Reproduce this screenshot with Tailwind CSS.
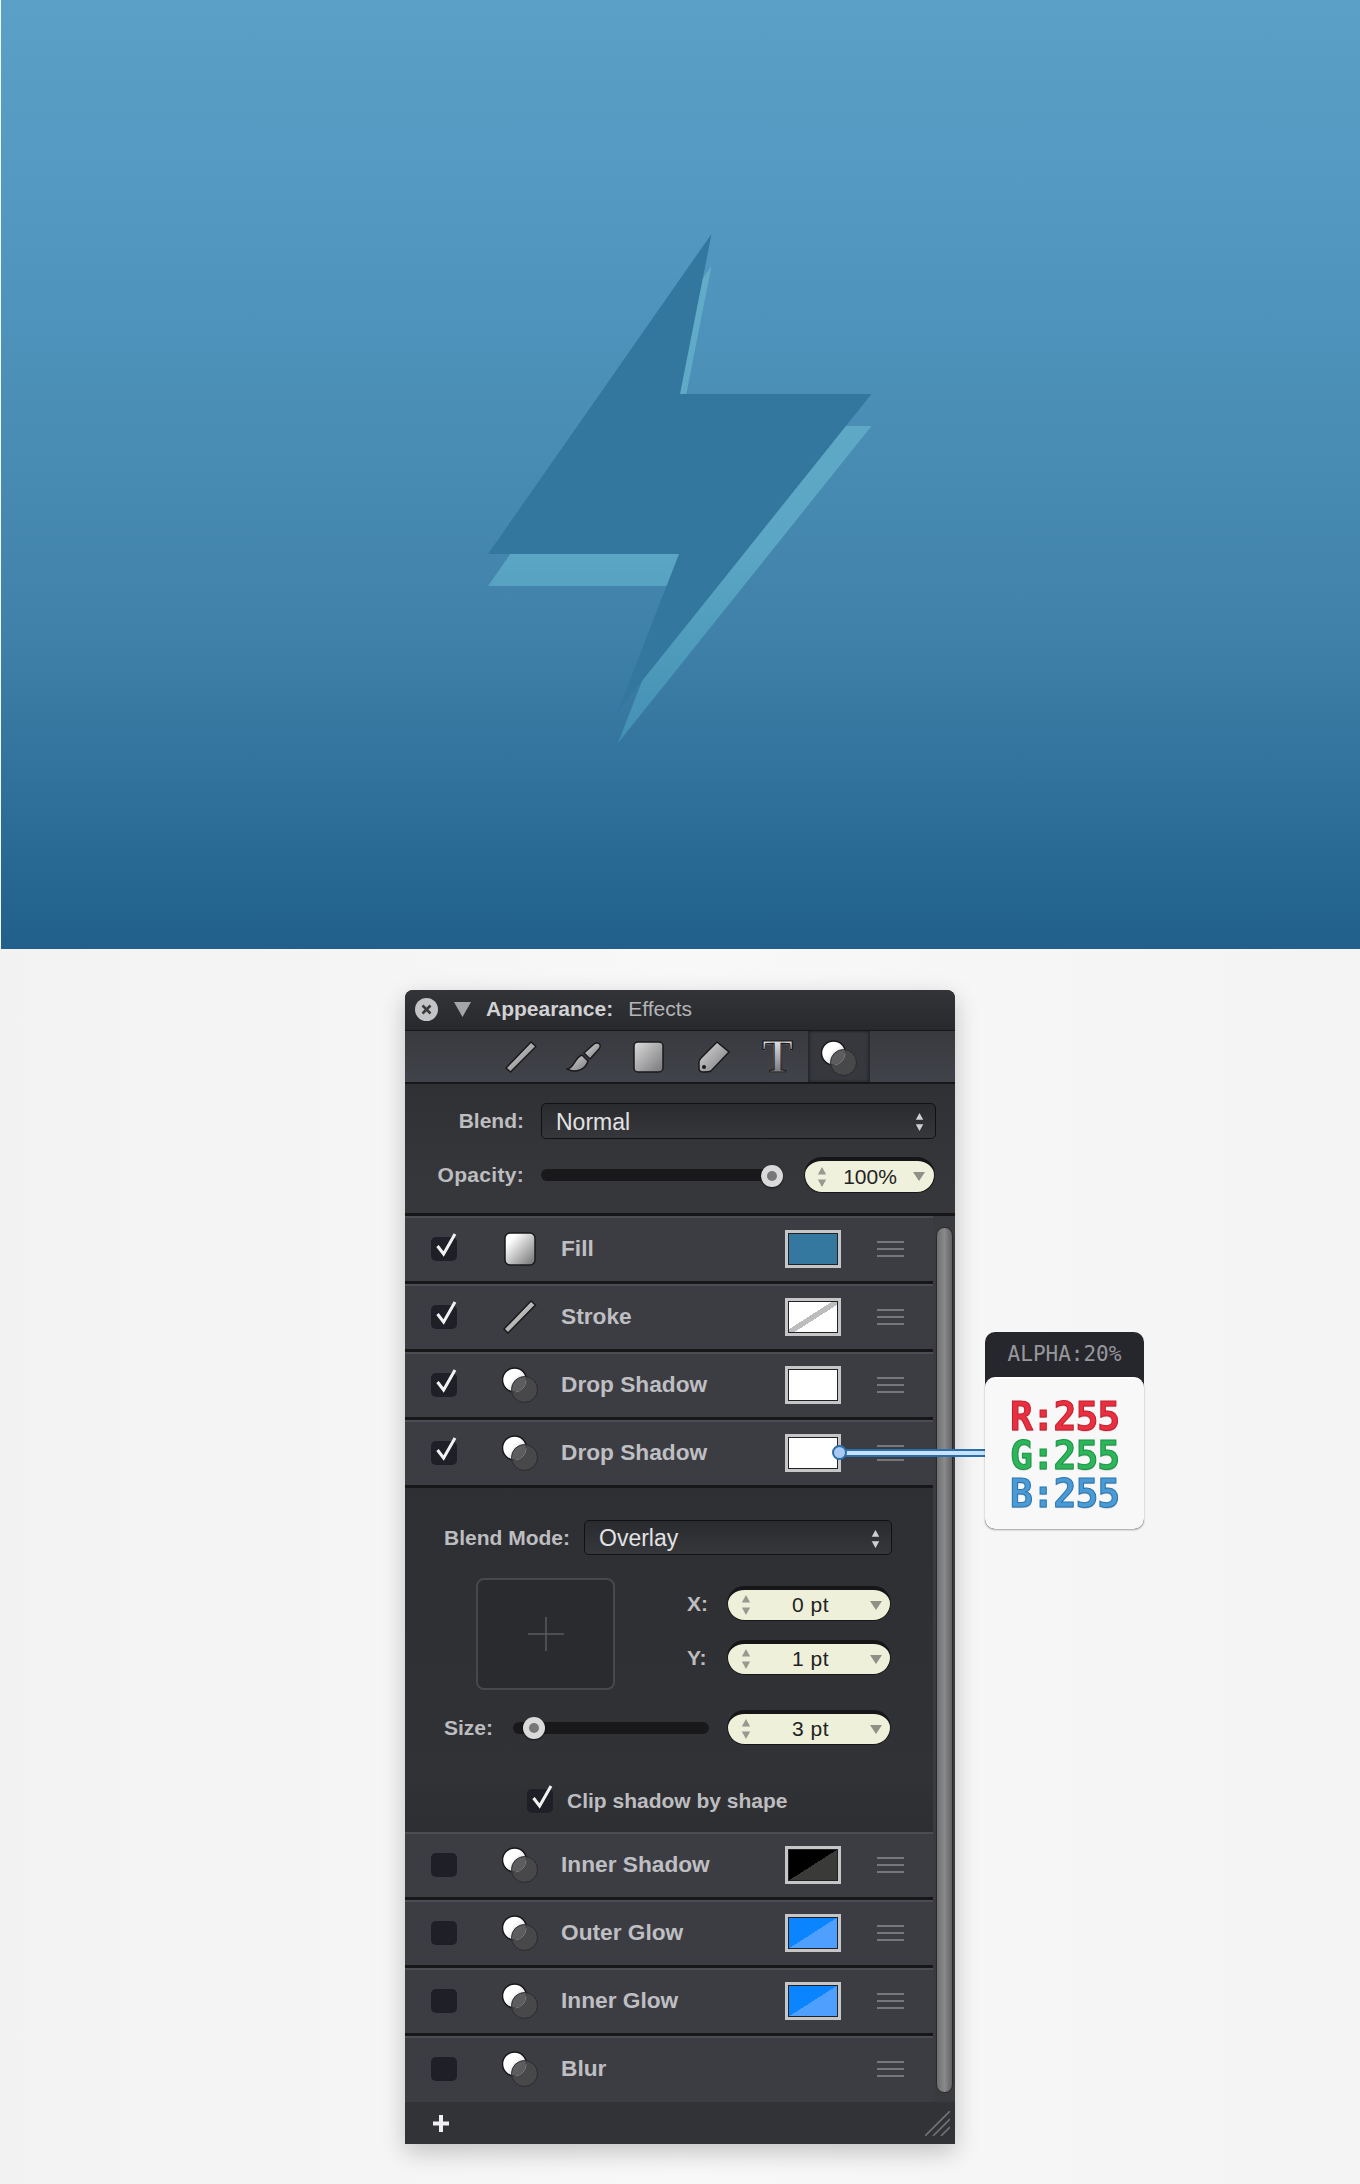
<!DOCTYPE html>
<html lang="en">
<head>
    <meta charset="UTF-8">
    <title>Appearance panel</title>
    <script src="https://cdn.jsdelivr.net/npm/@tailwindcss/browser@4"></script>
</head>
<body class="bg-[#f7f7f7] [font-family:'Liberation_Sans',sans-serif]">

<!-- shared gradients and icons -->
<svg class="absolute w-0 h-0">
    <defs>
        <linearGradient id="metal" x1="0" y1="0" x2="1" y2="1">
            <stop offset="0" stop-color="#f2f2f2"/><stop offset="1" stop-color="#7c7c7e"/>
        </linearGradient>
        <linearGradient id="tool" x1="0" y1="0" x2="1" y2="1">
            <stop offset="0" stop-color="#dcdcdc"/><stop offset="1" stop-color="#77777a"/>
        </linearGradient>
        <linearGradient id="fillBox" x1="0" y1="0" x2="1" y2="1">
            <stop offset="0.2" stop-color="#ffffff"/><stop offset="1" stop-color="#6e6e70"/>
        </linearGradient>
        <linearGradient id="ball" x1="0" y1="0" x2="1" y2="1">
            <stop offset="0.4" stop-color="#ffffff"/><stop offset="1" stop-color="#c5c5c5"/>
        </linearGradient>
        <linearGradient id="boltShadow" x1="0" y1="0" x2="0" y2="1">
            <stop offset="0" stop-color="#62acc8"/><stop offset="0.6" stop-color="#5ba6c4"/><stop offset="1" stop-color="#4290b3"/>
        </linearGradient>
        <symbol id="blobs" viewBox="0 0 36 36">
            <circle cx="12.5" cy="13" r="12" fill="url(#ball)" stroke="#17171a" stroke-width="1.5"/>
            <circle cx="22.5" cy="22.5" r="13" fill="#4a4a4c" stroke="#2b2b2d" stroke-width="1" fill-opacity="0.88"/>
            <path d="M13.5 25 A12 12 0 0 0 24.2 13.5" fill="none" stroke="#7c7c7e" stroke-width="1"/>
        </symbol>
        <symbol id="arrows" viewBox="0 0 12 26">
            <path d="M6 1 L11 10 L1 10 Z M1 16 L11 16 L6 25 Z" fill="currentColor"/>
        </symbol>
    </defs>
</svg>

<!-- banner -->
<div class="h-[949px] border-l border-[#f4f4f4] bg-[linear-gradient(to_bottom,#5ba0c6_0%,#5197bf_25%,#488bb2_50%,#3f80a8_68%,#2d6f98_85%,#20608a_100%)]">
    <svg class="block w-full h-full" viewBox="1 0 1359 949">
        <polygon points="711.5,266 680,426 871.5,426 618,743 679,586 488,586" fill="url(#boltShadow)"/>
        <polygon points="711.5,234 680,394 871.5,394 618,711 679,554 488,554" fill="#33769e"/>
    </svg>
</div>

<div class="h-[1235px] pt-[41px] bg-[linear-gradient(to_right,#f2f2f3,#f8f8f8_50%,#f4f4f5)]">
<!-- panel -->
<div class="relative ml-[405px] w-[550px] h-[1154px] flex flex-col rounded-t-[8px] bg-[#333438] shadow-[0_8px_24px_rgba(0,0,0,0.22)]">

    <!-- title bar -->
    <div class="h-[40px] shrink-0 flex items-center pl-[10px] pb-[2px] rounded-t-[8px] bg-[linear-gradient(to_bottom,#333438,#28292c)] text-[21px]">
        <div class="w-[23px] h-[23px] rounded-full bg-[#c4c4c6] flex items-center justify-center">
            <svg class="w-[11px] h-[11px]" viewBox="0 0 11 11"><path d="M1.5 1.5 L9.5 9.5 M9.5 1.5 L1.5 9.5" stroke="#3a3b3e" stroke-width="2.6"/></svg>
        </div>
        <svg class="ml-[16px] w-[17px] h-[15px]" viewBox="0 0 17 15"><path d="M0 0 H17 L8.5 15 Z" fill="#a4a5a8"/></svg>
        <span class="ml-[15px] font-bold text-[#d2d2d4]">Appearance:</span>
        <span class="ml-[15px] text-[#b4b5b8]">Effects</span>
    </div>

    <!-- tool tabs -->
    <div class="h-[54px] shrink-0 flex items-center pl-[100px] border-t border-b-[2px] border-t-[#17171a] border-b-[#17171a] bg-[linear-gradient(to_bottom,#383a3f,#41434a)]">
        <svg class="w-[32px] h-[32px]" viewBox="0 0 32 32"><path d="M1 27 L26 1 L31 5.5 L5.5 31 Z" fill="url(#tool)" stroke="#1a1a1c" stroke-width="1.5"/></svg>
        <svg class="ml-[29px] w-[36px] h-[32px]" viewBox="0 0 36 32">
            <path d="M1 28 C8 28 8 17 16 14 L22 20 C20 28 10 33 1 28 Z" fill="url(#tool)" stroke="#1a1a1c" stroke-width="1.5"/>
            <path d="M18 12 L28 3 C30 1 34 2 34 4 C35 6 34 7 33 8 L24 18 Z" fill="url(#tool)" stroke="#1a1a1c" stroke-width="1.5"/>
        </svg>
        <svg class="ml-[31px] w-[31px] h-[32px]" viewBox="0 0 31 32"><rect x="1" y="1" width="29" height="30" rx="4" fill="url(#tool)" stroke="#1a1a1c" stroke-width="1.5"/></svg>
        <svg class="ml-[34px] w-[32px] h-[32px]" viewBox="0 0 32 32">
            <path d="M19 1 L31 11 L13 30 Q11 31 5 31 Q1 31 1 27 L1 22 Q1 19 3 17 Z" fill="url(#tool)" stroke="#1a1a1c" stroke-width="1.5"/>
            <circle cx="6" cy="26" r="2" fill="#1a1a1c"/>
        </svg>
        <div class="ml-[33px] w-[29px] h-[32px] flex items-center justify-center [font-family:'Liberation_Serif',serif] font-bold text-[46px] leading-[32px] bg-[linear-gradient(to_bottom,#e0e0e0,#77777a)] bg-clip-text text-transparent [-webkit-text-stroke:1.2px_#1a1a1c]">T</div>
        <div class="ml-[16px] w-[62px] h-full flex items-center justify-center pt-[3px] bg-[#36383d] shadow-[inset_2px_0_3px_rgba(0,0,0,0.3),inset_-2px_0_3px_rgba(0,0,0,0.3)]">
            <svg class="w-[36px] h-[36px]"><use href="#blobs"/></svg>
        </div>
    </div>

    <!-- blend and opacity -->
    <div class="h-[132px] shrink-0 pt-[19px] border-b-[3px] border-[#17171a] bg-[linear-gradient(to_bottom,#303135,#37383c)]">
        <div class="flex items-center">
            <span class="w-[119px] text-right text-[21px] font-bold text-[#bdbdc0]">Blend:</span>
            <div class="ml-[17px] w-[395px] h-[36px] flex items-center justify-between pl-[14px] pr-[11px] pt-[2px] rounded-[5px] border border-[#111113] bg-[linear-gradient(to_bottom,#2a2b2e,#36373b)] text-[23px] text-[#e2e2e4]">
                Normal
                <svg class="w-[9px] h-[20px] text-[#cfcfd1]"><use href="#arrows"/></svg>
            </div>
        </div>
        <div class="mt-[18px] flex items-center">
            <span class="w-[119px] text-right text-[21px] font-bold tracking-[0.3px] text-[#bdbdc0]">Opacity:</span>
            <div class="relative ml-[17px] w-[231px] h-[12px] rounded-full bg-[#19191b]">
                <div class="absolute -right-[11px] -top-[4px] w-[22px] h-[22px] rounded-full bg-[#dadada] flex items-center justify-center shadow-[0_1px_2px_rgba(0,0,0,0.6)]">
                    <div class="w-[10px] h-[10px] rounded-full bg-[#77777a]"></div>
                </div>
            </div>
            <div class="ml-[32px] w-[131px] h-[36px] flex items-center pl-[12px] pr-[9px] rounded-full bg-[#f0f1dc] border border-t-[4px] border-[#161618] text-[21px] text-[#222224]">
                <svg class="w-[10px] h-[24px] text-[#98998f]"><use href="#arrows"/></svg>
                <span class="flex-1 text-center">100%</span>
                <svg class="w-[12px] h-[9px] text-[#8f9088]" viewBox="0 0 12 9"><path d="M0 0 H12 L6 9 Z" fill="currentColor"/></svg>
            </div>
        </div>
    </div>

    <!-- effect rows -->
    <div class="w-[528px] shrink-0">
        <div class="h-[68px] flex items-center pl-[26px] pr-[29px] pb-[2px] border-t-2 border-b-[3px] border-t-[#4c4d52] border-b-[#17171a] bg-[#3c3d42]">
            <div class="w-[26px] h-[24px] rounded-[5px] bg-[#1e1f27]">
                <svg class="w-[26px] h-[24px] overflow-visible" viewBox="0 0 26 24"><path d="M6.5 9 L12.6 17 L24 -3" fill="none" stroke="#f2f2f2" stroke-width="3"/></svg>
            </div>
            <svg class="ml-[45px] w-[36px] h-[36px]" viewBox="0 0 36 36"><rect x="3" y="2" width="30" height="32" rx="5" fill="url(#fillBox)" stroke="#1a1a1c" stroke-width="1.5"/></svg>
            <span class="ml-[23px] text-[22.7px] font-bold text-[#bfbfc3]">Fill</span>
            <div class="ml-auto w-[56px] h-[38px] border-[3px] border-[#c6c6c8] bg-[#34789f] shadow-[inset_0_0_0_1px_#222]"></div>
            <div class="ml-[36px] w-[27px] h-[16px] flex flex-col justify-between">
                <div class="h-[2px] bg-[#76777b]"></div><div class="h-[2px] bg-[#76777b]"></div><div class="h-[2px] bg-[#76777b]"></div>
            </div>
        </div>
        <div class="h-[68px] flex items-center pl-[26px] pr-[29px] pb-[2px] border-t-2 border-b-[3px] border-t-[#4c4d52] border-b-[#17171a] bg-[#3c3d42]">
            <div class="w-[26px] h-[24px] rounded-[5px] bg-[#1e1f27]">
                <svg class="w-[26px] h-[24px] overflow-visible" viewBox="0 0 26 24"><path d="M6.5 9 L12.6 17 L24 -3" fill="none" stroke="#f2f2f2" stroke-width="3"/></svg>
            </div>
            <svg class="ml-[45px] w-[36px] h-[36px]" viewBox="0 0 36 36"><path d="M2 30 L29 2 L33.5 6 L6 34 Z" fill="url(#metal)" stroke="#1a1a1c" stroke-width="1.5"/></svg>
            <span class="ml-[23px] text-[22.7px] font-bold text-[#bfbfc3]">Stroke</span>
            <div class="ml-auto w-[56px] h-[38px] border-[3px] border-[#c6c6c8] bg-[linear-gradient(to_bottom_right,#fff_45%,#bdbdbd_45%,#bdbdbd_55%,#fff_55%)] shadow-[inset_0_0_0_1px_#222]"></div>
            <div class="ml-[36px] w-[27px] h-[16px] flex flex-col justify-between">
                <div class="h-[2px] bg-[#76777b]"></div><div class="h-[2px] bg-[#76777b]"></div><div class="h-[2px] bg-[#76777b]"></div>
            </div>
        </div>
        <div class="h-[68px] flex items-center pl-[26px] pr-[29px] pb-[2px] border-t-2 border-b-[3px] border-t-[#4c4d52] border-b-[#17171a] bg-[#3c3d42]">
            <div class="w-[26px] h-[24px] rounded-[5px] bg-[#1e1f27]">
                <svg class="w-[26px] h-[24px] overflow-visible" viewBox="0 0 26 24"><path d="M6.5 9 L12.6 17 L24 -3" fill="none" stroke="#f2f2f2" stroke-width="3"/></svg>
            </div>
            <svg class="ml-[45px] w-[36px] h-[36px]"><use href="#blobs"/></svg>
            <span class="ml-[23px] text-[22.7px] font-bold text-[#bfbfc3]">Drop Shadow</span>
            <div class="ml-auto w-[56px] h-[38px] border-[3px] border-[#c6c6c8] bg-white shadow-[inset_0_0_0_1px_#222]"></div>
            <div class="ml-[36px] w-[27px] h-[16px] flex flex-col justify-between">
                <div class="h-[2px] bg-[#76777b]"></div><div class="h-[2px] bg-[#76777b]"></div><div class="h-[2px] bg-[#76777b]"></div>
            </div>
        </div>
        <div class="h-[68px] flex items-center pl-[26px] pr-[29px] pb-[2px] border-t-2 border-b-[3px] border-t-[#4c4d52] border-b-[#17171a] bg-[#3c3d42]">
            <div class="w-[26px] h-[24px] rounded-[5px] bg-[#1e1f27]">
                <svg class="w-[26px] h-[24px] overflow-visible" viewBox="0 0 26 24"><path d="M6.5 9 L12.6 17 L24 -3" fill="none" stroke="#f2f2f2" stroke-width="3"/></svg>
            </div>
            <svg class="ml-[45px] w-[36px] h-[36px]"><use href="#blobs"/></svg>
            <span class="ml-[23px] text-[22.7px] font-bold text-[#bfbfc3]">Drop Shadow</span>
            <div class="ml-auto w-[56px] h-[38px] border-[3px] border-[#c6c6c8] bg-white shadow-[inset_0_0_0_1px_#222]"></div>
            <div class="ml-[36px] w-[27px] h-[16px] flex flex-col justify-between">
                <div class="h-[2px] bg-[#76777b]"></div><div class="h-[2px] bg-[#76777b]"></div><div class="h-[2px] bg-[#76777b]"></div>
            </div>
        </div>
    </div>

    <!-- drop shadow settings -->
    <div class="w-[528px] h-[344px] shrink-0 pt-[32px] bg-[linear-gradient(to_bottom,#2e2f33,#313236_85%,#2d2e32)]">
        <div class="flex items-center pl-[39px]">
            <span class="w-[140px] text-[21px] font-bold text-[#bdbdc0]">Blend Mode:</span>
            <div class="w-[308px] h-[35px] flex items-center justify-between pl-[14px] pr-[11px] pt-[2px] rounded-[5px] border border-[#111113] bg-[linear-gradient(to_bottom,#2a2b2e,#36373b)] text-[23px] text-[#e2e2e4]">
                Overlay
                <svg class="w-[9px] h-[20px] text-[#cfcfd1]"><use href="#arrows"/></svg>
            </div>
        </div>
        <div class="mt-[23px] flex pl-[71px]">
            <div class="w-[139px] h-[112px] flex items-center justify-center rounded-[8px] border-2 border-[#47484c] bg-[#2a2b2e]">
                <svg class="w-[36px] h-[34px]" viewBox="0 0 36 34"><path d="M0 17 H36 M18 0 V34" stroke="#5a5b5f" stroke-width="1.5"/></svg>
            </div>
            <div class="pt-[8px] w-[276px] flex flex-col gap-[19px]">
                <div class="flex items-center">
                    <span class="ml-[72px] w-[40px] text-[21px] font-bold text-[#bdbdc0]">X:</span>
                    <div class="w-[164px] h-[35px] flex items-center pl-[13px] pr-[8px] rounded-full bg-[#eef0d9] border border-t-[4px] border-[#161618] text-[21px] tracking-[0.5px] text-[#222224]">
                        <svg class="w-[10px] h-[24px] text-[#98998f]"><use href="#arrows"/></svg>
                        <span class="flex-1 text-center">0 pt</span>
                        <svg class="w-[12px] h-[9px] text-[#8f9088]" viewBox="0 0 12 9"><path d="M0 0 H12 L6 9 Z" fill="currentColor"/></svg>
                    </div>
                </div>
                <div class="flex items-center">
                    <span class="ml-[72px] w-[40px] text-[21px] font-bold text-[#bdbdc0]">Y:</span>
                    <div class="w-[164px] h-[35px] flex items-center pl-[13px] pr-[8px] rounded-full bg-[#eef0d9] border border-t-[4px] border-[#161618] text-[21px] tracking-[0.5px] text-[#222224]">
                        <svg class="w-[10px] h-[24px] text-[#98998f]"><use href="#arrows"/></svg>
                        <span class="flex-1 text-center">1 pt</span>
                        <svg class="w-[12px] h-[9px] text-[#8f9088]" viewBox="0 0 12 9"><path d="M0 0 H12 L6 9 Z" fill="currentColor"/></svg>
                    </div>
                </div>
            </div>
        </div>
        <div class="mt-[20px] flex items-center pl-[39px]">
            <span class="w-[69px] text-[21px] font-bold text-[#bdbdc0]">Size:</span>
            <div class="relative w-[196px] h-[12px] rounded-full bg-[#19191b]">
                <div class="absolute left-[10px] -top-[5px] w-[22px] h-[22px] rounded-full bg-[#dadada] flex items-center justify-center shadow-[0_1px_2px_rgba(0,0,0,0.6)]">
                    <div class="w-[10px] h-[10px] rounded-full bg-[#77777a]"></div>
                </div>
            </div>
            <div class="ml-[18px] w-[164px] h-[35px] flex items-center pl-[13px] pr-[8px] rounded-full bg-[#eef0d9] border border-t-[4px] border-[#161618] text-[21px] tracking-[0.5px] text-[#222224]">
                <svg class="w-[10px] h-[24px] text-[#98998f]"><use href="#arrows"/></svg>
                <span class="flex-1 text-center">3 pt</span>
                <svg class="w-[12px] h-[9px] text-[#8f9088]" viewBox="0 0 12 9"><path d="M0 0 H12 L6 9 Z" fill="currentColor"/></svg>
            </div>
        </div>
        <div class="mt-[40px] flex items-center pl-[122px]">
            <div class="w-[26px] h-[24px] rounded-[5px] bg-[#1e1f27]">
                <svg class="w-[26px] h-[24px] overflow-visible" viewBox="0 0 26 24"><path d="M6.5 9 L12.6 17 L24 -3" fill="none" stroke="#f2f2f2" stroke-width="3"/></svg>
            </div>
            <span class="ml-[14px] text-[21px] font-bold text-[#bdbdc0]">Clip shadow by shape</span>
        </div>
    </div>

    <!-- unchecked rows -->
    <div class="w-[528px] shrink-0">
        <div class="h-[68px] flex items-center pl-[26px] pr-[29px] pb-[2px] border-t-2 border-b-[3px] border-t-[#4c4d52] border-b-[#17171a] bg-[#3c3d42]">
            <div class="w-[26px] h-[24px] rounded-[5px] bg-[#1e1f27]"></div>
            <svg class="ml-[45px] w-[36px] h-[36px]"><use href="#blobs"/></svg>
            <span class="ml-[23px] text-[22.7px] font-bold text-[#bfbfc3]">Inner Shadow</span>
            <div class="ml-auto w-[56px] h-[38px] border-[3px] border-[#c6c6c8] bg-[linear-gradient(to_bottom_right,#000_50%,#3a3a38_50%)] shadow-[inset_0_0_0_1px_#222]"></div>
            <div class="ml-[36px] w-[27px] h-[16px] flex flex-col justify-between">
                <div class="h-[2px] bg-[#76777b]"></div><div class="h-[2px] bg-[#76777b]"></div><div class="h-[2px] bg-[#76777b]"></div>
            </div>
        </div>
        <div class="h-[68px] flex items-center pl-[26px] pr-[29px] pb-[2px] border-t-2 border-b-[3px] border-t-[#4c4d52] border-b-[#17171a] bg-[#3c3d42]">
            <div class="w-[26px] h-[24px] rounded-[5px] bg-[#1e1f27]"></div>
            <svg class="ml-[45px] w-[36px] h-[36px]"><use href="#blobs"/></svg>
            <span class="ml-[23px] text-[22.7px] font-bold text-[#bfbfc3]">Outer Glow</span>
            <div class="ml-auto w-[56px] h-[38px] border-[3px] border-[#c6c6c8] bg-[linear-gradient(to_bottom_right,#0a84ff_50%,#4f9fff_50%)] shadow-[inset_0_0_0_1px_#222]"></div>
            <div class="ml-[36px] w-[27px] h-[16px] flex flex-col justify-between">
                <div class="h-[2px] bg-[#76777b]"></div><div class="h-[2px] bg-[#76777b]"></div><div class="h-[2px] bg-[#76777b]"></div>
            </div>
        </div>
        <div class="h-[68px] flex items-center pl-[26px] pr-[29px] pb-[2px] border-t-2 border-b-[3px] border-t-[#4c4d52] border-b-[#17171a] bg-[#3c3d42]">
            <div class="w-[26px] h-[24px] rounded-[5px] bg-[#1e1f27]"></div>
            <svg class="ml-[45px] w-[36px] h-[36px]"><use href="#blobs"/></svg>
            <span class="ml-[23px] text-[22.7px] font-bold text-[#bfbfc3]">Inner Glow</span>
            <div class="ml-auto w-[56px] h-[38px] border-[3px] border-[#c6c6c8] bg-[linear-gradient(to_bottom_right,#0a84ff_50%,#4f9fff_50%)] shadow-[inset_0_0_0_1px_#222]"></div>
            <div class="ml-[36px] w-[27px] h-[16px] flex flex-col justify-between">
                <div class="h-[2px] bg-[#76777b]"></div><div class="h-[2px] bg-[#76777b]"></div><div class="h-[2px] bg-[#76777b]"></div>
            </div>
        </div>
        <div class="h-[66px] flex items-center pl-[26px] pr-[29px] pb-[3px] border-t-2 border-t-[#4c4d52] bg-[#3c3d42]">
            <div class="w-[26px] h-[24px] rounded-[5px] bg-[#1e1f27]"></div>
            <svg class="ml-[45px] w-[36px] h-[36px]"><use href="#blobs"/></svg>
            <span class="ml-[23px] text-[22.7px] font-bold text-[#bfbfc3]">Blur</span>
            <div class="ml-auto w-[27px] h-[16px] flex flex-col justify-between">
                <div class="h-[2px] bg-[#76777b]"></div><div class="h-[2px] bg-[#76777b]"></div><div class="h-[2px] bg-[#76777b]"></div>
            </div>
        </div>
    </div>

    <!-- footer -->
    <div class="h-[42px] shrink-0 flex items-center justify-between pl-[28px] pr-[5px] bg-[#323337]">
        <svg class="w-[16px] h-[17px]" viewBox="0 0 16 17"><path d="M8 0 V17 M0 8.5 H16" stroke="#f0f0f2" stroke-width="4"/></svg>
        <svg class="w-[25px] h-[25px]" viewBox="0 0 25 25"><path d="M0 25 L25 0 M8 25 L25 8 M16 25 L25 16" stroke="#717276" stroke-width="1.6"/></svg>
    </div>

    <!-- scrollbar -->
    <div class="absolute left-[528px] top-[226px] w-[22px] h-[886px] bg-[#3a3b3f]">
        <div class="mx-auto mt-[11px] w-[17px] h-[866px] rounded-[9px] border border-[#2a2a2c] bg-[linear-gradient(to_right,#6f6f71,#8a8a8c_50%,#626264)]"></div>
    </div>

    <!-- alpha / rgb callout -->
    <div class="absolute left-[434px] top-[459px] w-[150px] h-[8px] bg-[#c7e2fa] border-y-2 border-[#2b6ea8]"></div>
    <div class="absolute left-[427px] top-[455px] w-[15px] h-[15px] rounded-full bg-[#a9c9f2] border-2 border-[#2b6ea8]"></div>
    <div class="absolute left-[580px] top-[342px] w-[159px] h-[197px] rounded-[10px] bg-[#26272c]">
        <div class="h-[45px] flex items-center justify-center [font-family:'DejaVu_Sans_Mono',monospace] text-[21px] text-[#97979c]">ALPHA:20%</div>
        <div class="h-[152px] pt-[18px] rounded-[10px] bg-[#f8f8f8] border-t-2 border-white shadow-[0_1px_2px_rgba(0,0,0,0.35)] flex flex-col items-center [font-family:'DejaVu_Sans_Mono',monospace] font-bold text-[38px] leading-[38.5px] tracking-[-1.1px]">
            <div class="scale-y-[1.05] text-[#ea2f40] [-webkit-text-stroke:1px_#c41e2e] [text-shadow:0_1px_1px_rgba(0,0,0,0.25)]">R:255</div>
            <div class="scale-y-[1.05] text-[#2db55a] [-webkit-text-stroke:1px_#1b9447] [text-shadow:0_1px_1px_rgba(0,0,0,0.25)]">G:255</div>
            <div class="scale-y-[1.05] text-[#4a9ad6] [-webkit-text-stroke:1px_#2a76b0] [text-shadow:0_1px_1px_rgba(0,0,0,0.25)]">B:255</div>
        </div>
    </div>
</div>
</div>

</body>
</html>
